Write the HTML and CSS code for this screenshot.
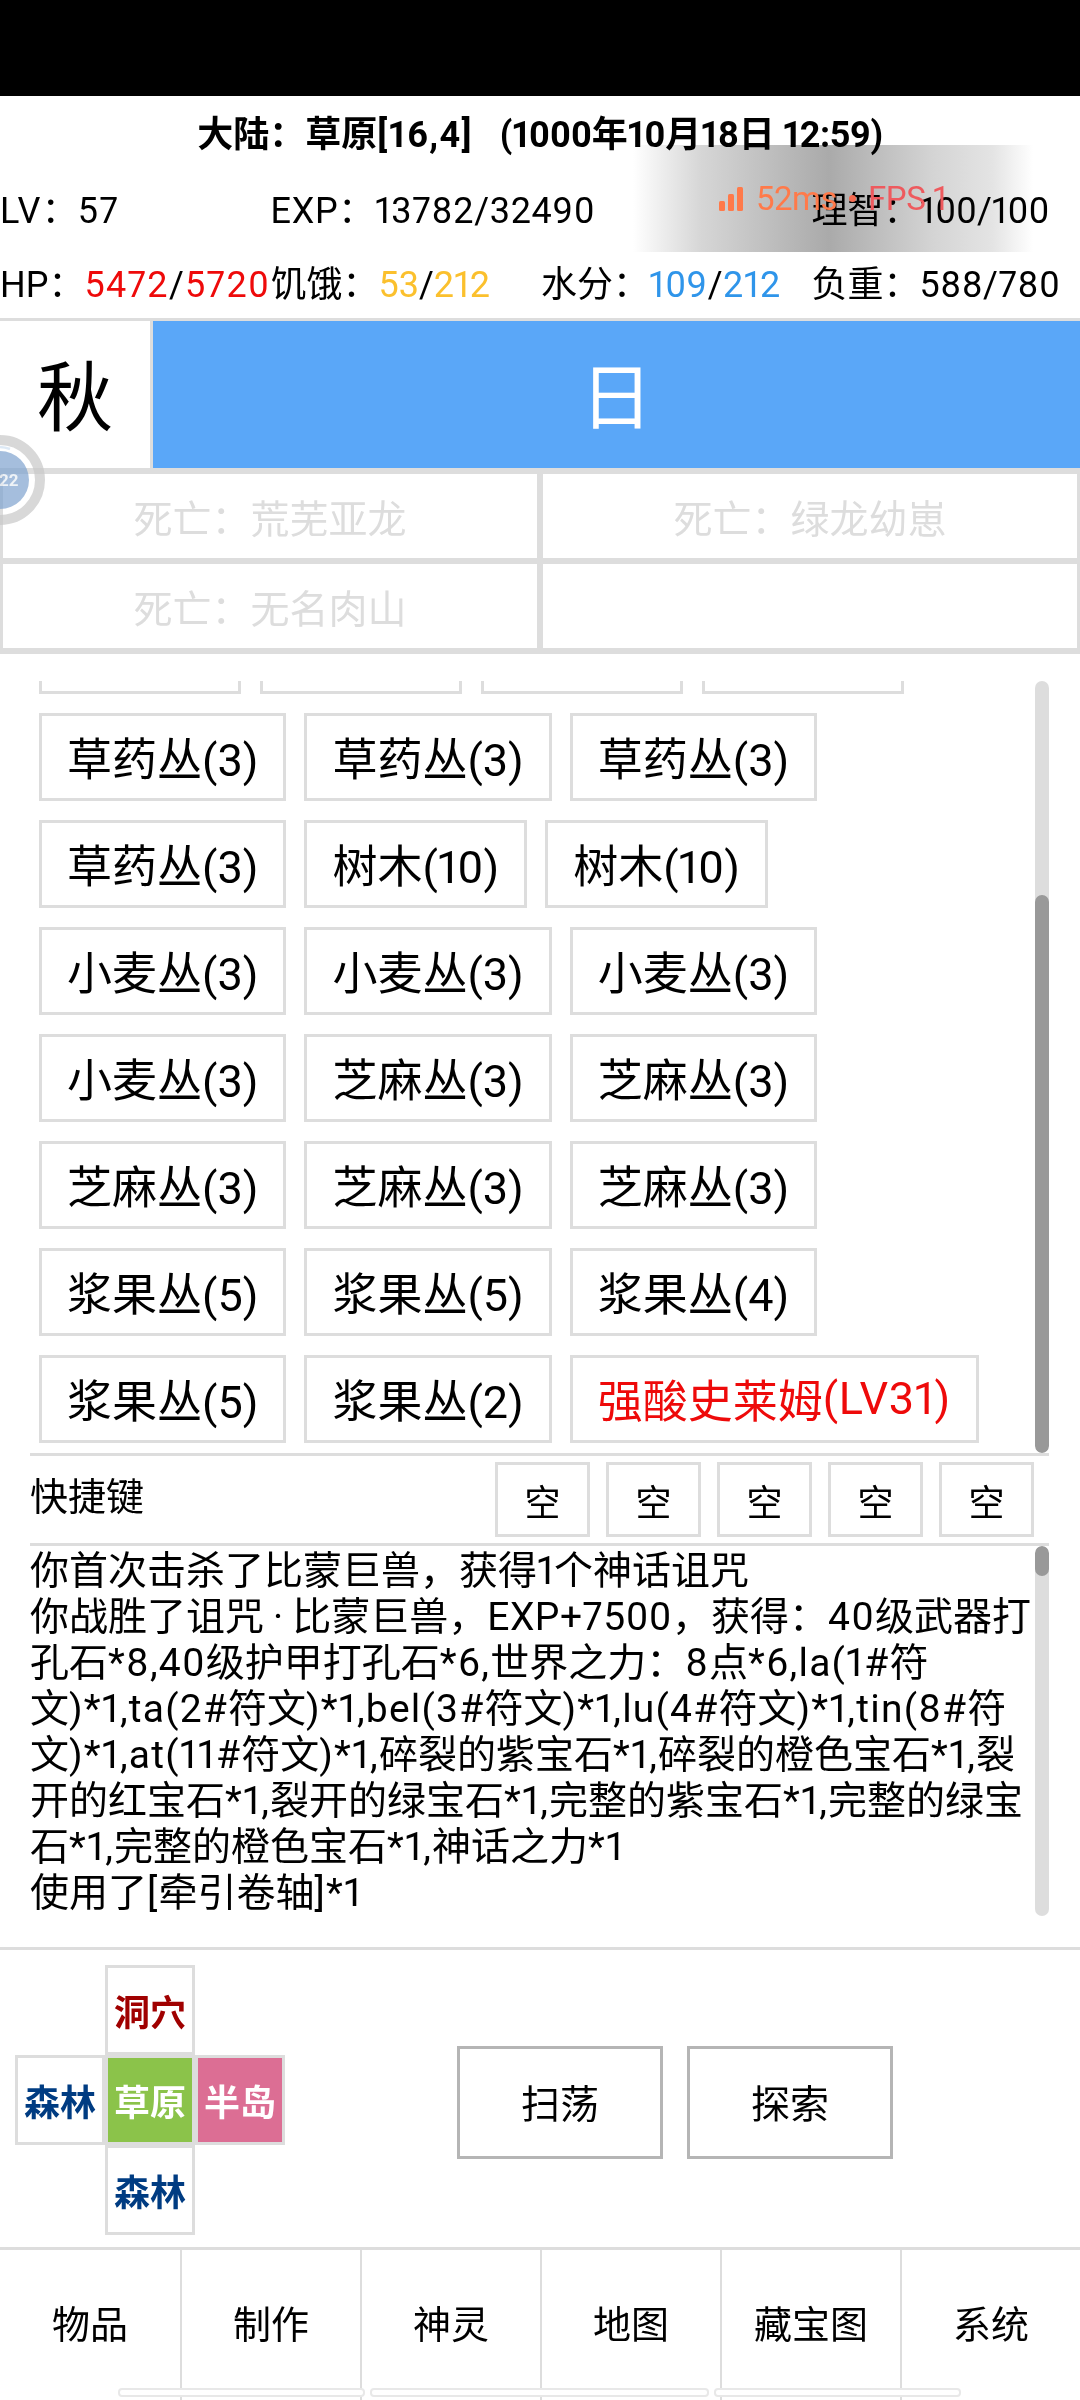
FILE: index.html
```html
<!DOCTYPE html>
<html lang="zh-CN">
<head>
<meta charset="utf-8">
<title>大陆</title>
<link rel="stylesheet" href="styles.css">
</head>
<body>
<div class="statusbar"></div>
<header class="head">
  <div class="title"><span class="title-place">大陆：草原<span class="wide">[16,4]</span></span><span class="title-time">(1000年10月18日 12:59)</span></div>
  <div class="stats">
    <span><span class="wide">LV</span>：<span class="wide">57</span></span>
    <span class="mid">EXP：13782/32490</span>
    <span class="s-end">理智：100/100</span>
  </div>
  <div class="stats">
    <span>HP：<span class="wide"><b class="red">5472</b>/<b class="red">5720</b></span></span>
    <span>饥饿：<b class="yellow">53</b>/<b class="yellow">212</b></span>
    <span>水分：<span class="slight"><b class="blue">109</b>/<b class="blue">212</b></span></span>
    <span>负重：<span class="slight">588/780</span></span>
  </div>
</header>
<section class="season">
  <div class="season-name">秋</div>
  <div class="season-time">日</div>
</section>
<section class="events">
  <div class="event">死亡：荒芜亚龙</div>
  <div class="event">死亡：绿龙幼崽</div>
  <div class="event">死亡：无名肉山</div>
  <div class="event"></div>
</section>
<section class="targets">
  <div class="scroller">
    <div class="btn-list">
      <div class="btn-row clipped"><div class="btn"></div><div class="btn"></div><div class="btn"></div><div class="btn"></div></div>
      <div class="btn-row"><div class="btn">草药丛(3)</div><div class="btn">草药丛(3)</div><div class="btn">草药丛(3)</div></div>
      <div class="btn-row"><div class="btn">草药丛(3)</div><div class="btn">树木(10)</div><div class="btn">树木(10)</div></div>
      <div class="btn-row"><div class="btn">小麦丛(3)</div><div class="btn">小麦丛(3)</div><div class="btn">小麦丛(3)</div></div>
      <div class="btn-row"><div class="btn">小麦丛(3)</div><div class="btn">芝麻丛(3)</div><div class="btn">芝麻丛(3)</div></div>
      <div class="btn-row"><div class="btn">芝麻丛(3)</div><div class="btn">芝麻丛(3)</div><div class="btn">芝麻丛(3)</div></div>
      <div class="btn-row"><div class="btn">浆果丛(5)</div><div class="btn">浆果丛(5)</div><div class="btn">浆果丛(4)</div></div>
      <div class="btn-row"><div class="btn">浆果丛(5)</div><div class="btn">浆果丛(2)</div><div class="btn enemy">强酸史莱姆<span class="slight">(LV31)</span></div></div>
    </div>
  </div>
  <div class="track track-list"><div class="thumb"></div></div>
</section>
<section class="quick">
  <div class="quick-label">快捷键</div>
  <div class="quick-keys">
    <div class="key">空</div><div class="key">空</div><div class="key">空</div><div class="key">空</div><div class="key">空</div>
  </div>
</section>
<section class="log-wrap">
  <div class="log">
    <div>你首次击杀了比蒙巨兽，获得1个神话诅咒</div>
    <div>你战胜了诅咒<span class="middot">·</span>比蒙巨兽，<span class="slight">EXP+7500</span>，获得：<span class="n">40</span>级武器打孔石<span class="n">*8,40</span>级护甲打孔石<span class="n">*6,</span>世界之力：<span class="n">8</span>点<span class="n">*6,la(1#</span>符文<span class="n">)*1,ta(2#</span>符文<span class="n">)*1,bel(3#</span>符文<span class="n">)*1,lu(4#</span>符文<span class="n">)*1,tin(8#</span>符文<span class="n">)*1,at(11#</span>符文<span class="n">)*1,</span>碎裂的紫宝石<span class="n">*1,</span>碎裂的橙色宝石<span class="n">*1,</span>裂开的红宝石<span class="n">*1,</span>裂开的绿宝石<span class="n">*1,</span>完整的紫宝石<span class="n">*1,</span>完整的绿宝石<span class="n">*1,</span>完整的橙色宝石<span class="n">*1,</span>神话之力<span class="n">*1</span></div>
    <div>使用了<span class="n">[</span>牵引卷轴<span class="n">]*1</span></div>
  </div>
  <div class="track track-log"><div class="thumb thumb-log"></div></div>
</section>
<section class="travel">
  <div class="compass">
    <div class="tile tile-n red-dark">洞穴</div>
    <div class="tile tile-w navy">森林</div>
    <div class="tile tile-c here">草原</div>
    <div class="tile tile-e pink">半岛</div>
    <div class="tile tile-s navy">森林</div>
  </div>
  <div class="actions">
    <div class="action">扫荡</div>
    <div class="action">探索</div>
  </div>
</section>
<nav class="nav">
  <div class="nav-item">物品</div>
  <div class="nav-item">制作</div>
  <div class="nav-item">神灵</div>
  <div class="nav-item">地图</div>
  <div class="nav-item">藏宝图</div>
  <div class="nav-item">系统</div>
</nav>
<div class="pills"><div class="pill pill-a"></div><div class="pill pill-b"></div><div class="pill pill-a"></div></div>

<div class="fps">
  <svg class="fps-icon" viewBox="0 0 24 24" width="24" height="24"><rect x="0" y="14" width="6" height="10" rx="1.5"/><rect x="9" y="7" width="6" height="17" rx="1.5"/><rect x="18" y="0" width="6" height="24" rx="1.5"/></svg>
  <span class="fps-ms">52ms</span><span class="fps-dot"></span><span class="fps-num">FPS 1</span>
</div>
<svg class="ball" viewBox="0 0 46 92" width="46" height="92">
  <circle cx="0" cy="46" r="40" fill="none" stroke="#c8c8c8" stroke-width="10"/>
  <circle cx="0" cy="46" r="29" fill="#7fa3cf"/>
  <path d="M0 13A33 33 0 0 1 10 15" fill="none" stroke="#cfe0f2" stroke-width="2.5"/>
  <text class="ball-text" x="-1" y="52">22</text>
</svg>
</body>
</html>
```

FILE: styles.css
```css
* { box-sizing: border-box; }
html, body { margin: 0; padding: 0; }
body {
  position: relative;
  width: 1080px;
  height: 2400px;
  overflow: hidden;
  background: #fff;
  color: #000;
  font-family: Roboto, "Noto Sans CJK SC", sans-serif;
  font-size: 36px;
  font-variant-numeric: proportional-nums;
}
b { font-weight: 400; }
.wide { letter-spacing: 1.3px; }
.mid { letter-spacing: 0.7px; }
.slight { letter-spacing: 0.5px; }
.n { letter-spacing: 1.2px; }
.statusbar { height: 96px; background: #000; }
.head { height: 222px; }
.title { height: 74px; padding-bottom: 5px; display: flex; align-items: center; justify-content: center; font-weight: 700; white-space: pre; }
.title-place { margin-right: 27px; }
.title-time { letter-spacing: -0.4px; }
.stats { height: 74px; display: grid; grid-template-columns: repeat(4, 270.5px); align-items: center; white-space: nowrap; }
.s-end { grid-column: 4; }
.red { color: #ee0a0a; }
.yellow { color: #fbc02d; }
.blue { color: #2f95ea; }

.season { display: flex; height: 150px; border-top: 3px solid #ddd; }
.season-name { width: 153px; border-right: 3px solid #ddd; display: flex; align-items: center; justify-content: center; font-size: 76px; padding-bottom: 6px; }
.season-time { flex: 1; background: #5aa7f8; color: #fff; display: flex; align-items: center; justify-content: center; font-size: 72px; padding-bottom: 6px; }

.events { display: grid; grid-template-columns: 1fr 1fr; grid-auto-rows: 90px; border-top: 3px solid #ddd; border-bottom: 3px solid #ddd; }
.event { border: 3px solid #ddd; display: flex; align-items: center; justify-content: center; color: #ddd; font-size: 39px; }

.targets { position: relative; height: 772px; margin-top: 27px; padding-left: 39px; display: flex; }
.scroller { width: 996px; height: 772px; overflow: hidden; }
.btn-list { margin-top: -75px; display: flex; flex-direction: column; gap: 19px; }
.btn-row { display: flex; gap: 18px; }
.btn-row.clipped { gap: 19px; }
.clipped .btn { width: 202px; }
.btn { height: 88px; border: 3px solid #ddd; padding: 0 25px 2px 25px; display: flex; align-items: center; font-size: 45px; white-space: nowrap; }
.enemy { color: #ee0a0a; }
.track { width: 14px; background: #ddd; border-radius: 7px; position: relative; overflow: hidden; }
.track-list { height: 772px; }
.thumb { height: 558px; margin-top: 214px; background: #999; border-radius: 7px; }
.thumb-log { height: 30px; margin-top: 0; }

.quick { margin: 0 31px 0 30px; height: 93px; border-top: 3px solid #ddd; border-bottom: 3px solid #ddd; display: flex; align-items: center; justify-content: space-between; }
.quick-label { font-size: 38px; margin-top: -12px; }
.quick-keys { display: flex; gap: 16px; margin-right: 15px; }
.key { width: 95px; height: 75px; border: 3px solid #ddd; display: flex; align-items: center; justify-content: center; font-size: 36px; }

.log-wrap { height: 370px; margin: 0 31px 0 30px; display: flex; justify-content: space-between; }
.log { width: 1005px; padding-top: 2px; font-size: 39px; line-height: 46px; }
.middot { margin: 0 9px; }
.track-log { height: 370px; }

.travel { height: 300px; border-top: 3px solid #ddd; margin-top: 31px; display: flex; align-items: center; padding-top: 3px; }
.compass { width: 270px; height: 270px; margin-left: 15px; display: grid; grid-template-columns: repeat(3, 90px); grid-template-rows: repeat(3, 90px); }
.tile { border: 3px solid #ddd; display: flex; align-items: center; justify-content: center; font-weight: 700; font-size: 36px; }
.tile-n { grid-column: 2; grid-row: 1; }
.tile-w { grid-column: 1; grid-row: 2; }
.tile-c { grid-column: 2; grid-row: 2; }
.tile-e { grid-column: 3; grid-row: 2; }
.tile-s { grid-column: 2; grid-row: 3; }
.red-dark { color: #a00000; }
.navy { color: #003c82; }
.here { background: #8bc34a; color: #fff; }
.pink { background: #dc6e94; color: #fff; }
.actions { margin-left: 172px; margin-top: 5px; display: flex; gap: 24px; }
.action { width: 206px; height: 113px; border: 3px solid #b5b5b5; display: flex; align-items: center; justify-content: center; font-size: 39px; padding-bottom: 4px; }

.nav { height: 153px; border-top: 3px solid #ddd; display: flex; }
.nav-item { width: 180px; height: 153px; border-right: 2px solid #ddd; display: flex; align-items: center; justify-content: center; font-size: 38px; padding-bottom: 10px; }
.nav-item:first-child { width: 182px; }
.nav-item:last-child { flex: 1; border-right: none; }

.fps { position: absolute; left: 633px; top: 145px; width: 400px; height: 107px; padding-left: 86px; display: flex; align-items: center; font-size: 33px; letter-spacing: -0.5px; color: #ff7a4a; }
.fps::before { content: ""; position: absolute; inset: 0; background: linear-gradient(90deg, #fff 0%, #d6d6d6 17%, #aaa 49%, #b4b4b4 55%, #d4d4d4 75%, #e4e4e4 90%, #fff 100%); mix-blend-mode: multiply; }
.fps-icon { fill: #ff7a4a; margin-right: 13px; position: relative; }
.fps-ms, .fps-dot, .fps-num { position: relative; }
.fps-dot { width: 7px; height: 7px; margin: 0 12px; border-radius: 50%; background: #f56a50; }
.fps-num { color: #ee5a5e; }

.ball { position: absolute; left: 0; top: 434px; opacity: 0.7; }
.ball-text { font-size: 17px; fill: #e8eef4; font-weight: 700; }

.pills { position: absolute; left: 118px; top: 2388px; display: flex; gap: 5px; }
.pill { height: 9px; border: 2px solid #e8e8e8; border-radius: 4px; background: #fff; }
.pill-a { width: 247px; }
.pill-b { width: 339px; }
```
